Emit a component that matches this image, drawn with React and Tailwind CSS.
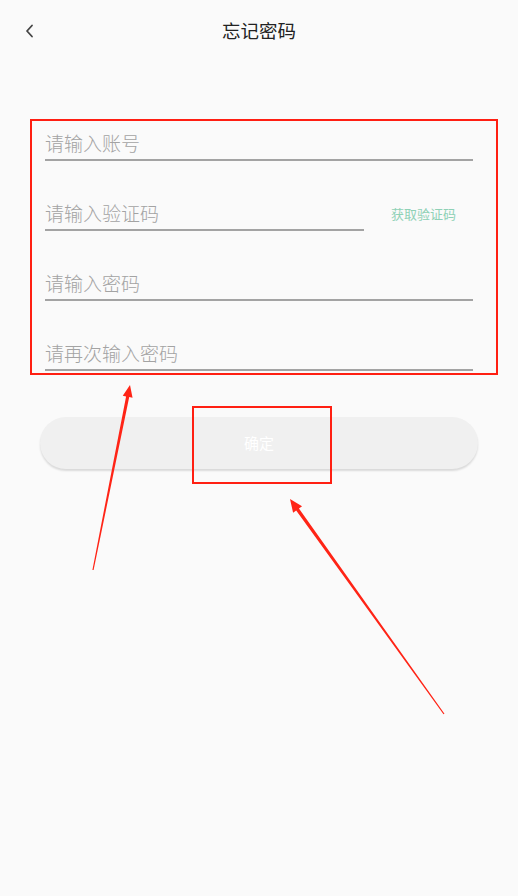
import React from "react";

const fields = [
  { key: "account", placeholder: "请输入账号" },
  { key: "code", placeholder: "请输入验证码", withCode: true },
  { key: "password", placeholder: "请输入密码" },
  { key: "repeat", placeholder: "请再次输入密码" },
];

function BackIcon() {
  return (
    <svg width="12" height="14" viewBox="0 0 12 14" fill="none">
      <path d="M8 1.5 L3 7 L8 12.5" stroke="#444" strokeWidth="1.8" strokeLinecap="round" strokeLinejoin="round" />
    </svg>
  );
}

function Field({ placeholder, withCode }) {
  return (
    <div className="flex items-end">
      <div
        className={
          "h-[43px] flex items-end pb-[4px] border-b-2 border-[#a3a3a3] " +
          (withCode ? "w-[319px]" : "w-[428px]")
        }
      >
        <input
          placeholder={placeholder}
          className="w-full bg-transparent outline-none text-[19px] leading-[24px] font-light text-[#333] placeholder:text-[#a3a3a3]"
        />
      </div>
      {withCode && (
        <button className="ml-[27px] mb-[8px] text-[13px] leading-[18px] text-[#8fd1b6]">
          获取验证码
        </button>
      )}
    </div>
  );
}

// red marker annotations drawn over the screenshot
function Annotations() {
  return (
    <>
      <div className="absolute left-[30px] top-[119px] w-[468px] h-[256px] border-2 border-[#ff1f12] pointer-events-none" />
      <div className="absolute left-[192px] top-[406px] w-[140px] h-[78px] border-2 border-[#ff1f12] pointer-events-none" />
      <svg className="absolute left-0 top-0 pointer-events-none" width="518" height="896" viewBox="0 0 518 896">
        <polygon
          fill="#ff2416"
          points="92.41,569.88 126.08,396.45 122.75,395.78 130,385 132.55,397.74 129.22,397.07 93.59,570.12"
        />
        <polygon
          fill="#ff2416"
          points="290,499 302.04,506.37 298.95,508.58 444.49,713.65 443.51,714.35 296.19,510.56 293.1,512.77"
        />
      </svg>
    </>
  );
}

export default function App() {
  return (
    <div
      className="relative w-[518px] h-[896px] bg-[#fafafa] overflow-hidden"
      style={{ fontFamily: '"Noto Sans CJK SC", "Noto Sans", sans-serif' }}
    >
      <header className="relative h-[62px] flex items-center justify-center">
        <button className="absolute left-[24px] top-[24px] p-0">
          <BackIcon />
        </button>
        <h1 className="text-[18.5px] text-[#222]">忘记密码</h1>
      </header>

      <form className="pl-[45px] pt-[56px] flex flex-col gap-[27px]">
        {fields.map((f) => (
          <Field key={f.key} {...f} />
        ))}
      </form>

      <div className="px-[40px] pt-[46px]">
        <button className="w-full h-[52px] rounded-full bg-[#f0f0f0] shadow-[0_2px_2px_rgba(0,0,0,0.13)] text-white text-[15px]">
          确定
        </button>
      </div>

      <Annotations />
    </div>
  );
}
